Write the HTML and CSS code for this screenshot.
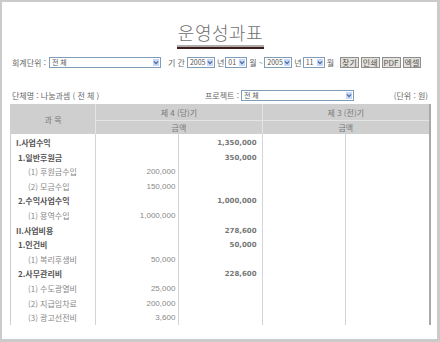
FILE: index.html
```html
<!DOCTYPE html>
<html lang="ko">
<head>
  <meta charset="UTF-8" />
  <title>운영성과표</title>
  <link rel="stylesheet" href="styles.css">
</head>
<body>
  <div class="page">
    <h1 class="title"><span>운영성과표</span></h1>

    <div class="filter">
      <span class="lbl">회계단위 :</span>
      <span class="combo w-unit"><span class="val">전 체</span><span class="arrow"><svg width="7" height="7" viewBox="0 0 7 7"><path d="M1 2.2l2.5 2.5L6 2.2" stroke="#4d6a9c" stroke-width="1.4" fill="none"/></svg></span></span>
      <span class="lbl period">기 간</span>
      <span class="combo w-year"><span class="val">2005</span><span class="arrow"><svg width="7" height="7" viewBox="0 0 7 7"><path d="M1 2.2l2.5 2.5L6 2.2" stroke="#4d6a9c" stroke-width="1.4" fill="none"/></svg></span></span>
      <span class="lbl">년</span>
      <span class="combo w-mon"><span class="val">01</span><span class="arrow"><svg width="7" height="7" viewBox="0 0 7 7"><path d="M1 2.2l2.5 2.5L6 2.2" stroke="#4d6a9c" stroke-width="1.4" fill="none"/></svg></span></span>
      <span class="lbl">월 ~</span>
      <span class="combo w-year"><span class="val">2005</span><span class="arrow"><svg width="7" height="7" viewBox="0 0 7 7"><path d="M1 2.2l2.5 2.5L6 2.2" stroke="#4d6a9c" stroke-width="1.4" fill="none"/></svg></span></span>
      <span class="lbl">년</span>
      <span class="combo w-mon"><span class="val">11</span><span class="arrow"><svg width="7" height="7" viewBox="0 0 7 7"><path d="M1 2.2l2.5 2.5L6 2.2" stroke="#4d6a9c" stroke-width="1.4" fill="none"/></svg></span></span>
      <span class="lbl">월</span>
      <span class="btns">
        <button>찾기</button>
        <button>인쇄</button>
        <button>PDF</button>
        <button>엑셀</button>
      </span>
    </div>

    <div class="info">
      <span class="org">단체명 : 나눔과셈 ( 전 체 )</span>
      <span class="proj">
        <span class="lbl">프로젝트 :</span>
        <span class="combo w-proj"><span class="val">전 체</span><span class="arrow"><svg width="7" height="7" viewBox="0 0 7 7"><path d="M1 2.2l2.5 2.5L6 2.2" stroke="#4d6a9c" stroke-width="1.4" fill="none"/></svg></span></span>
      </span>
      <span class="unit">(단위 : 원)</span>
    </div>

    <table class="report">
      <colgroup>
        <col class="c-subj">
        <col class="c-amt">
        <col class="c-amt">
        <col class="c-amt">
        <col class="c-amt">
      </colgroup>
      <thead>
        <tr class="h1">
          <th rowspan="2">과 목</th>
          <th colspan="2">제 4 (당)기</th>
          <th colspan="2">제 3 (전)기</th>
        </tr>
        <tr class="h2">
          <th colspan="2">금액</th>
          <th colspan="2">금액</th>
        </tr>
      </thead>
      <tbody>
        <tr class="gap"><td></td><td></td><td></td><td></td><td></td></tr>
        <tr class="lv1"><td>I.사업수익</td><td></td><td class="tot">1,350,000</td><td></td><td></td></tr>
        <tr class="lv2"><td>1.일반후원금</td><td></td><td class="tot">350,000</td><td></td><td></td></tr>
        <tr class="lv3"><td>(1) 후원금수입</td><td class="num">200,000</td><td></td><td></td><td></td></tr>
        <tr class="lv3"><td>(2) 모금수입</td><td class="num">150,000</td><td></td><td></td><td></td></tr>
        <tr class="lv2"><td>2.수익사업수익</td><td></td><td class="tot">1,000,000</td><td></td><td></td></tr>
        <tr class="lv3"><td>(1) 용역수입</td><td class="num">1,000,000</td><td></td><td></td><td></td></tr>
        <tr class="lv1"><td>II.사업비용</td><td></td><td class="tot">278,600</td><td></td><td></td></tr>
        <tr class="lv2"><td>1.인건비</td><td></td><td class="tot">50,000</td><td></td><td></td></tr>
        <tr class="lv3"><td>(1) 복리후생비</td><td class="num">50,000</td><td></td><td></td><td></td></tr>
        <tr class="lv2"><td>2.사무관리비</td><td></td><td class="tot">228,600</td><td></td><td></td></tr>
        <tr class="lv3"><td>(1) 수도광열비</td><td class="num">25,000</td><td></td><td></td><td></td></tr>
        <tr class="lv3"><td>(2) 지급임차료</td><td class="num">200,000</td><td></td><td></td><td></td></tr>
        <tr class="lv3"><td>(3) 광고선전비</td><td class="num">3,600</td><td></td><td></td><td></td></tr>
      </tbody>
    </table>
  </div>
</body>
</html>
```

FILE: styles.css
```css
html, body { margin: 0; padding: 0; background: #fff; }
body { font-family: "Noto Sans CJK KR", "Liberation Sans", sans-serif; font-size: 8px; color: #666; }

.page { width: 440px; height: 342px; box-sizing: border-box; border: solid #cbcbcb; border-width: 2px 3px 3px 2px; padding: 0 6px 0 8px; overflow: hidden; }

.title { margin: 20px 0 0; text-align: center; font-size: 18px; line-height: 20px; font-weight: 300; color: #707070; letter-spacing: 0.5px; }
.title span { display: inline-block; padding: 0 1px 3px; border-bottom: 2px solid #b0aaaa; box-shadow: 0 2px 0 #3e1d1d; }

.filter { display: flex; align-items: center; height: 11px; margin-top: 10px; padding-left: 2px; white-space: nowrap; }
.lbl { line-height: 11px; }
.filter .lbl { margin-right: 1px; }
.filter .period { margin-left: 4px; margin-right: 2px; }

.combo { display: inline-flex; align-items: stretch; height: 11px; box-sizing: border-box; border: 1px solid #7f9db9; background: #fff; margin-right: 2px; }
.combo .val { flex: 1; padding-left: 2px; line-height: 9px; font-size: 7px; color: #555; }
.combo .arrow { width: 8px; display: flex; align-items: center; justify-content: center; background: #c8d8fb; border: 1px solid #fff; box-sizing: border-box; }
.w-unit { width: 112px; margin-left: 2px; margin-right: 3px; }
.w-year { width: 28px; }
.w-mon { width: 22px; }
.w-proj { width: 113px; }

.btns { display: flex; gap: 2px; margin-left: 5px; }
.btns button { height: 11px; padding: 0 1px; margin: 0; font: 8px/9px "Noto Sans CJK KR", "Liberation Sans", sans-serif; color: #555; background: #e4e2da; border: 1px solid #8e8e8e; }

.info { display: flex; align-items: center; height: 11px; margin-top: 22px; padding-left: 2px; white-space: nowrap; }
.info .org { width: 193px; }
.proj { display: flex; align-items: center; }
.proj .lbl { margin-right: 2px; }
.unit { margin-left: auto; margin-right: 3px; }

.report { margin-top: 3px; width: 421px; table-layout: fixed; border-collapse: separate; border-spacing: 0; border-left: 1px solid #cfcfcf; border-right: 2px solid #a9a9a9; }
.c-subj { width: 85px; }
.c-amt { width: 83px; }
.report th { background: #cfcfcf; color: #777; font-weight: normal; font-size: 8px; padding: 0; border-right: 1px solid #e4e4e4; }
.report th:last-child { border-right: none; }
.report .h1 th { height: 16px; }
.report .h1 th[colspan] { border-bottom: 1px solid #e4e4e4; }
.report .h2 th { height: 13px; }

.report td { height: 14.6px; padding: 0; border-right: 1px solid #d4d4d4; white-space: nowrap; line-height: 14px; }
.report td:last-child { border-right: none; }
.report .gap td { height: 1.7px; line-height: 0; }

.lv1 td:first-child { padding-left: 5px; font-weight: bold; color: #555; }
.lv2 td:first-child { padding-left: 7px; font-weight: bold; color: #555; }
.lv3 td:first-child { padding-left: 17px; color: #888; }

.num { text-align: right; padding-right: 3px !important; font-family: "Liberation Sans", sans-serif; color: #888; }
.tot { text-align: right; padding-right: 5px !important; font-family: "DejaVu Sans", sans-serif; font-weight: bold; font-size: 7px; color: #777; }
```
